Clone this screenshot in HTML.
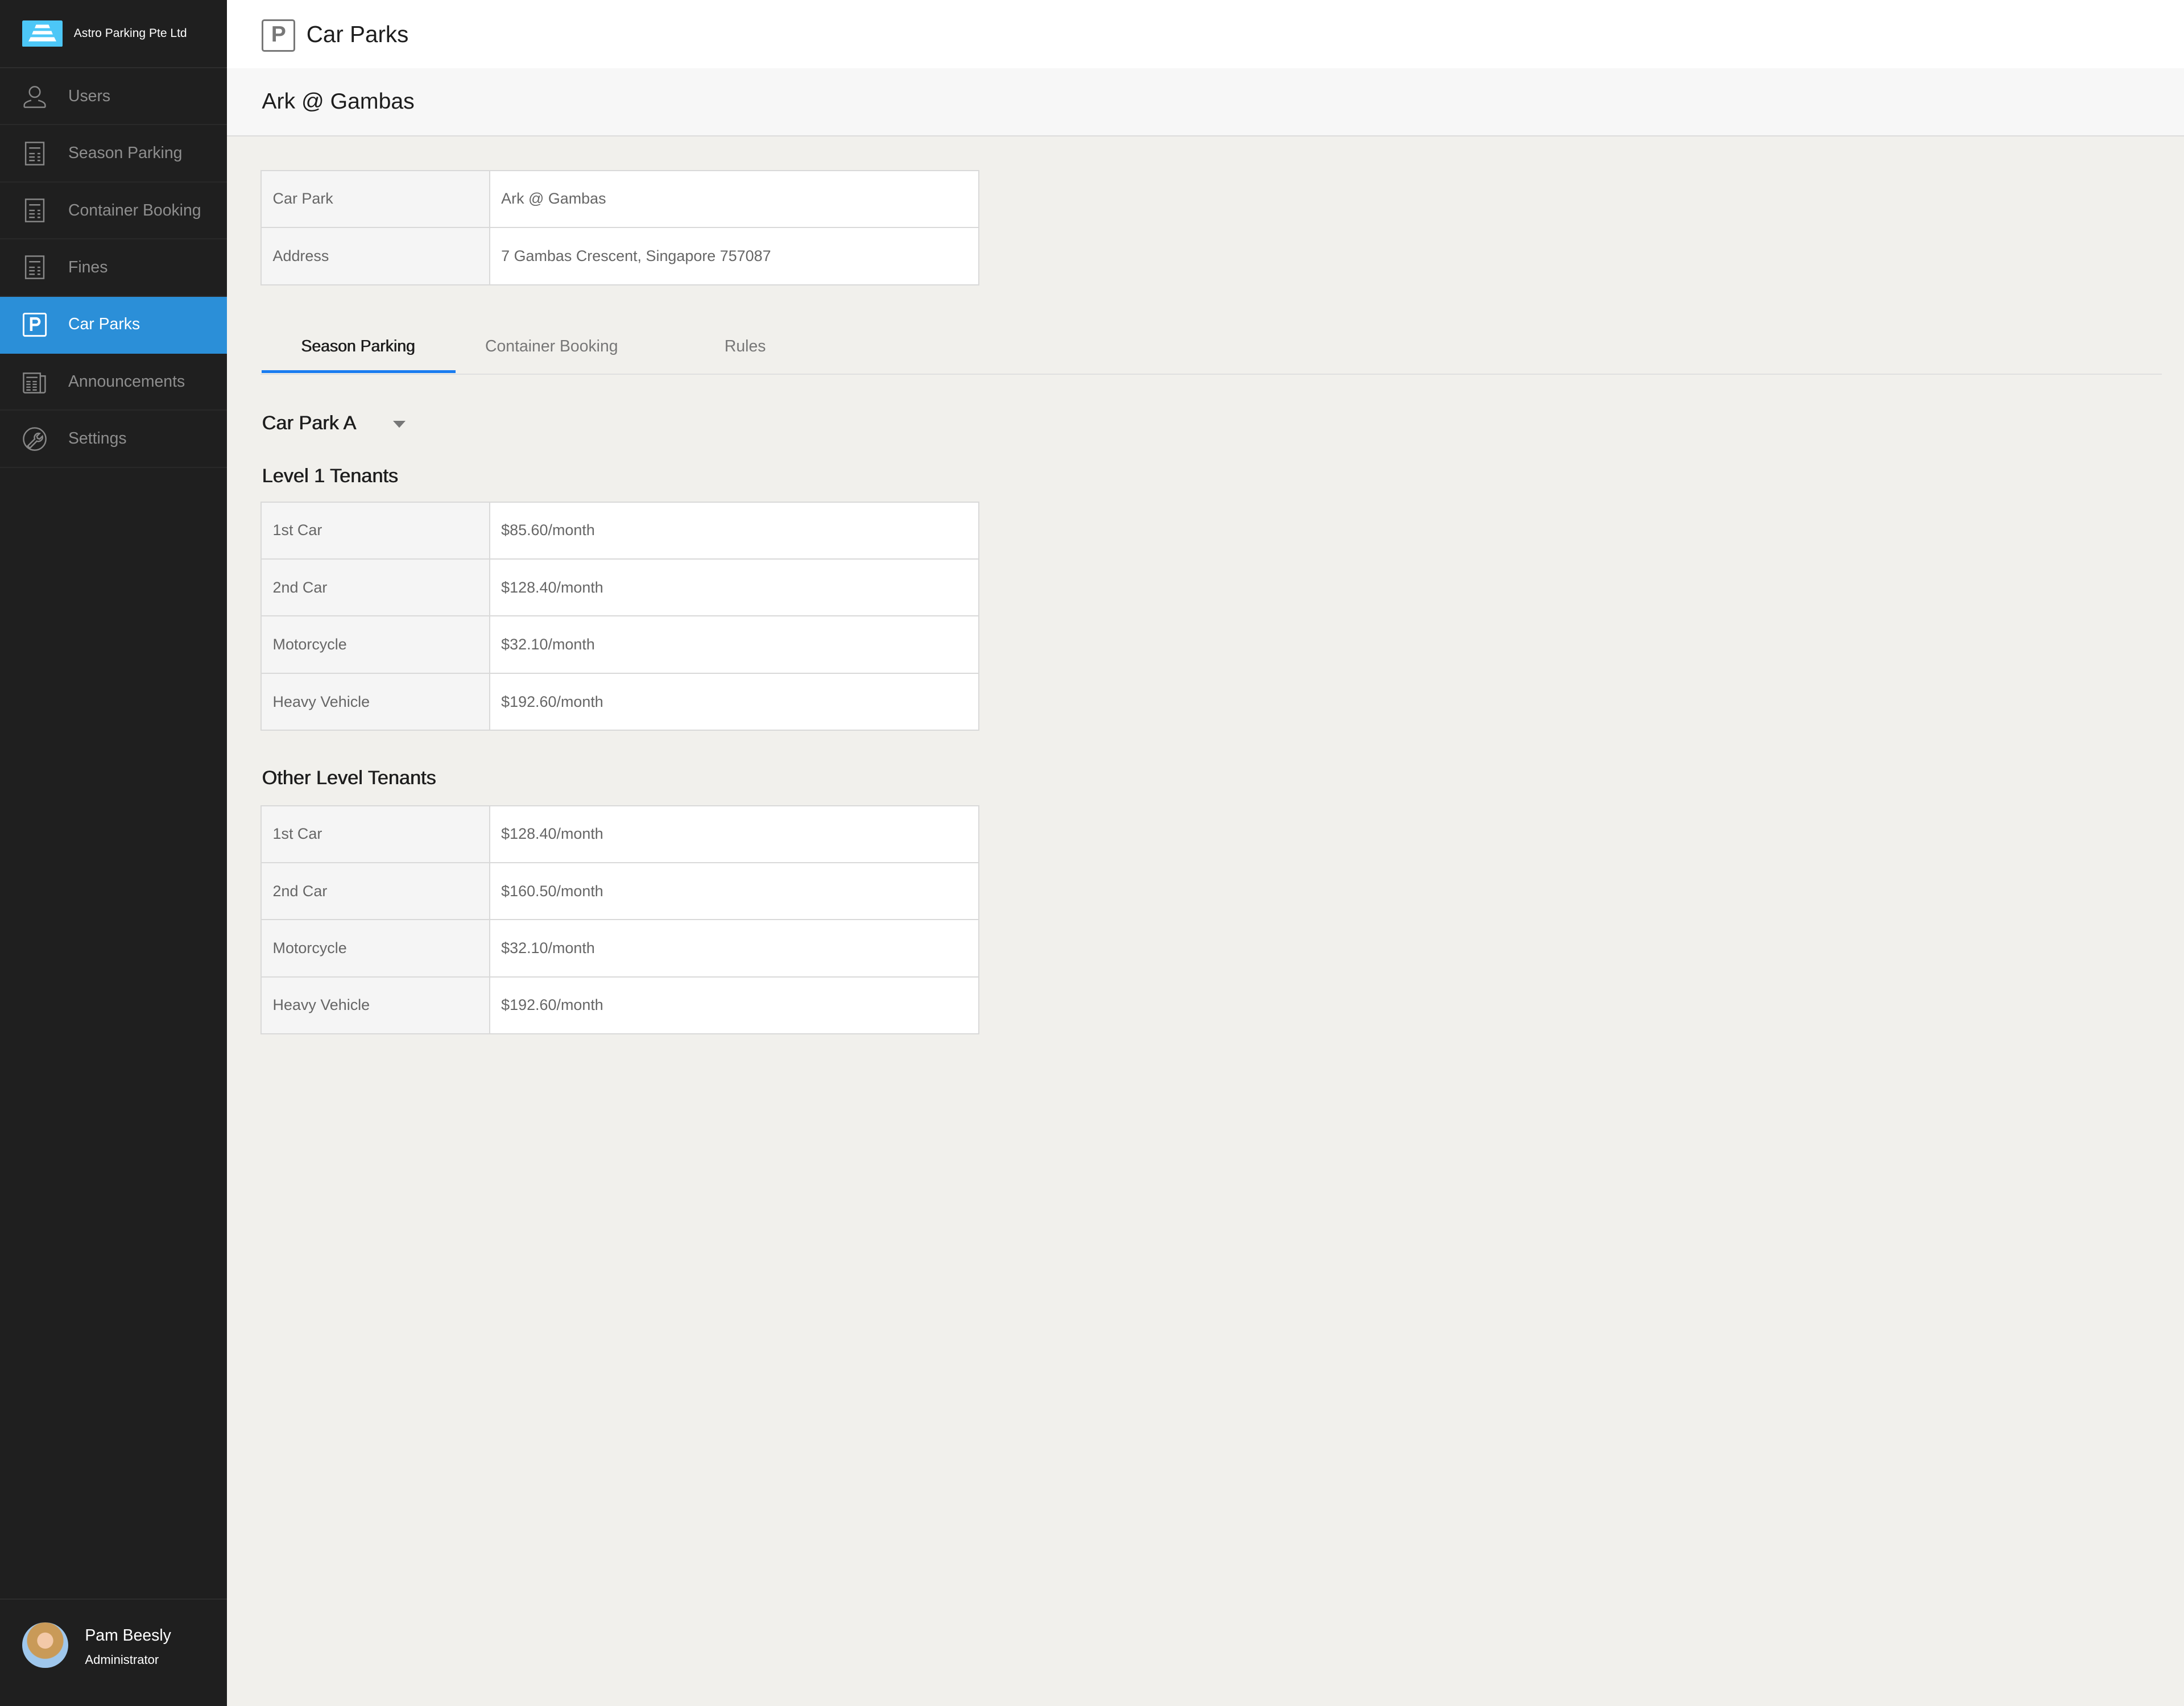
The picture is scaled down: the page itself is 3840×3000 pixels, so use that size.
<!DOCTYPE html>
<html><head><meta charset="utf-8">
<style>
html{zoom:2.44898}
*{box-sizing:border-box;margin:0;padding:0}
body{width:1568px;height:1225px;overflow:hidden;background:#f1f0ec;font-family:"Liberation Sans",sans-serif;position:relative}
.side{position:absolute;left:0;top:0;width:163px;height:1225px;background:#1f1f1f}
.brand{height:49px;border-bottom:1px solid #2d2d2d;display:flex;align-items:center;padding-left:16px}
.brand span{color:#fff;font-size:8.6px;margin-left:8px}
.nav{height:41px;border-bottom:1px solid #292929;display:flex;align-items:center;padding-left:16px;color:#8e8e8e;font-size:11.6px}
.nav svg{width:18px;height:18px;margin-right:15px;flex:none}
.nav.act{background:#2b8fd8;color:#fff;border-bottom-color:#2b8fd8}
.user{position:absolute;left:0;top:1148px;width:163px;border-top:1px solid #2d2d2d;height:77px}
.av{position:absolute;left:16px;top:16px;width:33px;height:33px;border-radius:50%;background:radial-gradient(circle at 50% 40%,#f3c9a8 0 22%,#c99a58 23% 50%,#9fc7ec 52%)}
.un{position:absolute;left:61px;top:19px;color:#fff;font-size:11.6px}
.ur{position:absolute;left:61px;top:38px;color:#fff;font-size:9px}
.top{position:absolute;left:163px;top:0;right:0;height:49px;background:#fff}
.top .p{position:absolute;left:25px;top:14px;width:24px;height:23px;border:1.5px solid #777;border-radius:2px;color:#777;font-weight:bold;font-size:16px;text-align:center;line-height:20px}
.top h1{position:absolute;left:57px;top:15px;font-size:16.5px;font-weight:normal;color:#1d1d1d}
.sub{position:absolute;left:163px;top:49px;right:0;height:49px;background:#f7f7f7;border-bottom:1px solid #dcdcdc}
.sub h2{position:absolute;left:25px;top:15px;font-size:16px;font-weight:normal;color:#1d1d1d}
table{position:absolute;left:187px;width:516px;border-collapse:collapse;background:#fff;font-size:11px;color:#666}
td{border:1px solid #d9d9d9;height:41px;padding-left:8px}
td:first-child{width:164px;background:#f5f5f5}
.tabs{position:absolute;left:187px;top:232px;width:1365px;height:37px;border-bottom:1px solid #e0e0e0}
.tab{position:absolute;top:10px;font-size:11.6px;color:#777;transform:translateX(-50%);white-space:nowrap}
.ul{position:absolute;left:1px;top:34px;width:139px;height:2px;background:#1a7cf0}
.h{position:absolute;left:188px;font-size:14px;color:#1d1d1d;text-shadow:0.3px 0 0 #1d1d1d}
</style></head><body>
<div class="side">
 <div class="brand"><svg width="29" height="19" viewBox="0 0 29 19"><rect width="29" height="19" rx="1" fill="#4cc7f7"/><path d="M10 3h9l1 2.5h-11zM8 7.5h13l1 2.5h-15zM6 12h17l1.5 3h-20z" fill="#fff"/></svg><span>Astro Parking Pte Ltd</span></div>
 <div class="nav"><svg viewBox="0 0 18 18" fill="none" stroke="#888" stroke-width="1"><circle cx="9" cy="6" r="3.8"/><path d="M1.5 17v-1.5c0-2 3-3 5-3.5M16.5 17v-1.5c0-2-3-3-5-3.5M1.5 17h15"/></svg>Users</div>
 <div class="nav"><svg viewBox="0 0 18 18" fill="none" stroke="#888" stroke-width="1"><rect x="2.5" y="1" width="13" height="16"/><path d="M5 5h8M5 9h4M5 11.5h4M5 14h4M11 9h2M11 11.5h2M11 14h2"/></svg>Season Parking</div>
 <div class="nav"><svg viewBox="0 0 18 18" fill="none" stroke="#888" stroke-width="1"><rect x="2.5" y="1" width="13" height="16"/><path d="M5 5h8M5 9h4M5 11.5h4M5 14h4M11 9h2M11 11.5h2M11 14h2"/></svg>Container Booking</div>
 <div class="nav"><svg viewBox="0 0 18 18" fill="none" stroke="#888" stroke-width="1"><rect x="2.5" y="1" width="13" height="16"/><path d="M5 5h8M5 9h4M5 11.5h4M5 14h4M11 9h2M11 11.5h2M11 14h2"/></svg>Fines</div>
 <div class="nav act"><svg viewBox="0 0 18 18" fill="none" stroke="#fff" stroke-width="1.2"><rect x="1" y="1" width="16" height="16" rx="1"/><path d="M6.5 13.5V4.5h3.5a2.3 2.3 0 0 1 0 4.6H6.5" stroke-width="1.8"/></svg>Car Parks</div>
 <div class="nav"><svg viewBox="0 0 18 18" fill="none" stroke="#888" stroke-width="1"><path d="M1 3h12v14H2a1 1 0 0 1-1-1zM13 5h3.5v11a1 1 0 0 1-1 1H13"/><path d="M3 6h8M3 9h3M3 11h3M3 13h3M3 15h3M7.5 9h3M7.5 11h3M7.5 13h3M7.5 15h3"/></svg>Announcements</div>
 <div class="nav"><svg viewBox="0 0 18 18" fill="none" stroke="#888" stroke-width="1"><circle cx="9" cy="9" r="8"/><path d="M4 14l5-5a3 3 0 0 1 3.5-4l-2 2 .5 1.5 1.5.5 2-2a3 3 0 0 1-4 3.5l-5 5z"/></svg>Settings</div>
 <div class="user"><div class="av"></div><div class="un">Pam Beesly</div><div class="ur">Administrator</div></div>
</div>
<div class="top"><div class="p">P</div><h1>Car Parks</h1></div>
<div class="sub"><h2>Ark @ Gambas</h2></div>
<table style="top:122px"><tr><td>Car Park</td><td>Ark @ Gambas</td></tr><tr><td>Address</td><td>7 Gambas Crescent, Singapore 757087</td></tr></table>
<div class="tabs"><div class="tab" style="left:70px;color:#1d1d1d;text-shadow:0.3px 0 0 #1d1d1d">Season Parking</div><div class="tab" style="left:209px">Container Booking</div><div class="tab" style="left:348px">Rules</div><div class="ul"></div></div>
<div class="h" style="top:296px">Car Park A</div>
<svg style="position:absolute;left:282px;top:302px" width="9" height="5"><path d="M0 0h9L4.5 5z" fill="#777"/></svg>
<div class="h" style="top:334px">Level 1 Tenants</div>
<table style="top:360px"><tr><td>1st Car</td><td>$85.60/month</td></tr><tr><td>2nd Car</td><td>$128.40/month</td></tr><tr><td>Motorcycle</td><td>$32.10/month</td></tr><tr><td>Heavy Vehicle</td><td>$192.60/month</td></tr></table>
<div class="h" style="top:551px">Other Level Tenants</div>
<table style="top:578px"><tr><td>1st Car</td><td>$128.40/month</td></tr><tr><td>2nd Car</td><td>$160.50/month</td></tr><tr><td>Motorcycle</td><td>$32.10/month</td></tr><tr><td>Heavy Vehicle</td><td>$192.60/month</td></tr></table>
</body></html>
